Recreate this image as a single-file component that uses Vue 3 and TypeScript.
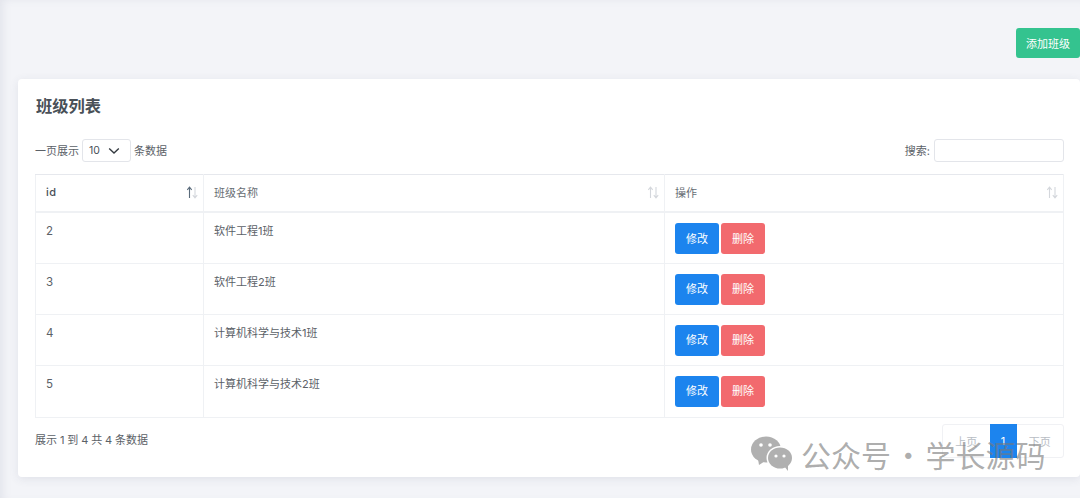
<script setup lang="ts">
interface Row { id: number; name: string }
const rows: Row[] = [
  { id: 2, name: '软件工程1班' },
  { id: 3, name: '软件工程2班' },
  { id: 4, name: '计算机科学与技术1班' },
  { id: 5, name: '计算机科学与技术2班' },
]
</script>

<template>
  <div class="page">
    <div class="top-bar"><button class="add-btn">添加班级</button></div>
    <section class="card">
      <h1 class="title">班级列表</h1>
      <div class="tools">
        <div class="length">
          <span class="label">一页展示</span>
          <span class="select">
            <span>10</span>
            <svg width="12" height="8" viewBox="0 0 12 8"><path d="M1.2 1.5 6 6l4.8-4.5" fill="none" stroke="#343a40" stroke-width="1.4"/></svg>
          </span>
          <span class="label">条数据</span>
        </div>
        <div class="search"><span class="label">搜索:</span><span class="search-input"></span></div>
      </div>
      <table class="table">
        <colgroup><col class="c1" /><col class="c2" /><col /></colgroup>
        <thead>
          <tr>
            <th class="id-head">id
              <svg class="sort" width="12" height="13" viewBox="0 0 12 13">
                <path d="M3.500 12V1.500M1.300 3.800 3.500 1.200l2.200 2.600" fill="none" stroke="#5a6b7b" stroke-width="1.100"/>
                <path d="M9 1v10.500M6.800 9.200 9 11.800l2.200-2.600" fill="none" stroke="#d4d7dc" stroke-width="1.100"/>
              </svg>
            </th>
            <th>班级名称
              <svg class="sort" width="12" height="13" viewBox="0 0 12 13">
                <path d="M3.500 12V1.500M1.300 3.800 3.500 1.200l2.200 2.600" fill="none" stroke="#d4d7dc" stroke-width="1.100"/>
                <path d="M9 1v10.500M6.800 9.200 9 11.800l2.200-2.600" fill="none" stroke="#d4d7dc" stroke-width="1.100"/>
              </svg>
            </th>
            <th>操作
              <svg class="sort" width="12" height="13" viewBox="0 0 12 13">
                <path d="M3.500 12V1.500M1.300 3.800 3.500 1.200l2.200 2.600" fill="none" stroke="#d4d7dc" stroke-width="1.100"/>
                <path d="M9 1v10.500M6.800 9.200 9 11.800l2.200-2.600" fill="none" stroke="#d4d7dc" stroke-width="1.100"/>
              </svg>
            </th>
          </tr>
        </thead>
        <tbody>
          <tr v-for="r in rows" :key="r.id">
            <td class="num">{{ r.id }}</td>
            <td>{{ r.name }}</td>
            <td class="ops"><button class="btn blue">修改</button><button class="btn red">删除</button></td>
          </tr>
        </tbody>
      </table>
      <div class="foot">
        <span class="info">展示 1 到 4 共 4 条数据</span>
        <div class="pager">
          <span class="pg">上页</span><span class="pg active">1</span><span class="pg">下页</span>
        </div>
      </div>
    </section>
    <div class="watermark">
      <svg width="42" height="36" viewBox="0 0 42 36">
        <ellipse cx="15" cy="13.500" rx="15" ry="13" fill="#b0b0b0"/>
        <path d="M7 23l1 6 6-4z" fill="#b0b0b0"/>
        <ellipse cx="29" cy="22" rx="13.500" ry="12" fill="#fff"/>
        <ellipse cx="29" cy="22" rx="12" ry="10.500" fill="#b0b0b0"/>
        <path d="M33 30l4 5 0-8z" fill="#b0b0b0"/>
        <circle cx="10" cy="9" r="1.800" fill="#fff"/><circle cx="19" cy="9" r="1.800" fill="#fff"/>
        <circle cx="25" cy="20" r="1.600" fill="#fff"/><circle cx="33" cy="20" r="1.600" fill="#fff"/>
      </svg>
      <span>公众号 · 学长源码</span>
    </div>
  </div>
</template>

<style>
html, body { margin: 0; background: #f3f4f8; overflow: hidden; }
</style>

<style scoped>
.page {
  position: relative;
  height: 498px;
  width: 1080px;
  box-sizing: border-box;
  padding: 28px 0 0 18px;
  background: #f3f4f8;
  box-shadow: inset 6px 2px 8px -3px rgba(90, 100, 130, 0.1);
  overflow: hidden;
  font-family: "Inter", "Noto Sans CJK SC", sans-serif;
  font-size: 11px;
  color: #5b6167;
}
.top-bar { display: flex; justify-content: flex-end; height: 30px; margin-bottom: 21px; }
.add-btn {
  width: 64px; height: 30px; border: 0; padding: 0; border-radius: 3px;
  background: #34c38f; color: #fff; font: inherit; font-size: 11px;
}
.card {
  box-sizing: border-box;
  height: 398px;
  padding: 16px 16px 0 17px;
  background: #fff;
  border-radius: 4px;
  box-shadow: 0 2px 10px rgba(60, 70, 100, 0.1);
}
.title { margin: 0 0 0 1px; font-size: 16.250px; line-height: 22px; font-weight: 700; color: #495057; }
.tools { display: flex; justify-content: space-between; align-items: center; margin-top: 22px; height: 23px; }
.length, .search { display: flex; align-items: center; gap: 3px; }
.search { gap: 4px; }
.label { padding-bottom: 2px; }
.select {
  box-sizing: border-box; width: 49px; height: 23px; border: 1px solid #e3e5ea; border-radius: 3px;
  display: flex; align-items: center; gap: 8px; padding-left: 6px; font-size: 10.500px; color: #495057;
}
.search-input { box-sizing: border-box; width: 130px; height: 23px; border: 1px solid #e3e5ea; border-radius: 3px; }
.table {
  width: 1029px; margin-top: 12px; border-collapse: collapse; table-layout: fixed;
  border: 1px solid #eceef2;
}
.c1 { width: 168px; }
.c2 { width: 461px; }
th, td { border: 1px solid #eff1f4; text-align: left; vertical-align: top; padding: 0 10px; }
th {
  position: relative; height: 34px; vertical-align: middle; font-weight: 400; color: #676d73;
  border-top-color: #e6e8ed; border-bottom: 2px solid #eff1f4; padding-bottom: 2px;
}
.id-head { font-weight: 500; color: #495057; letter-spacing: 0.5px; }
td { height: 51px; box-sizing: border-box; padding-top: 10px; line-height: 16px; }
td.num { font-size: 11.500px; letter-spacing: 0.3px; }
tr:last-child td { height: 52px; }
.sort { position: absolute; right: 5px; top: 11px; }
.btn { width: 44px; height: 31px; border: 0; padding: 0; border-radius: 3px; color: #fff; font: inherit; font-size: 11px; margin-right: 2px; }
.blue { background: #1c84ee; }
.red { background: #f26a6e; }
.foot { display: flex; justify-content: space-between; align-items: flex-start; margin-top: 6px; }
.info { margin-top: 7px; color: #5b6167; word-spacing: -0.200px; }
.pager { display: flex; width: 122px; height: 34px; box-sizing: border-box; border: 1px solid #f0f1f4; border-radius: 3px; }
.pg { flex: 1; display: flex; align-items: center; justify-content: center; color: #b8bdc4; font-size: 11px; }
.active { flex: 0 0 27px; margin: -1px 0; background: #1c84ee; color: #fff; }
.watermark {
  position: absolute; left: 751px; top: 436px; display: flex; align-items: center; gap: 8px;
  color: rgba(120, 120, 120, 0.62); font-size: 30px; word-spacing: -4.500px; line-height: 36px; font-family: "Noto Sans CJK SC", sans-serif; white-space: nowrap;
}
</style>
